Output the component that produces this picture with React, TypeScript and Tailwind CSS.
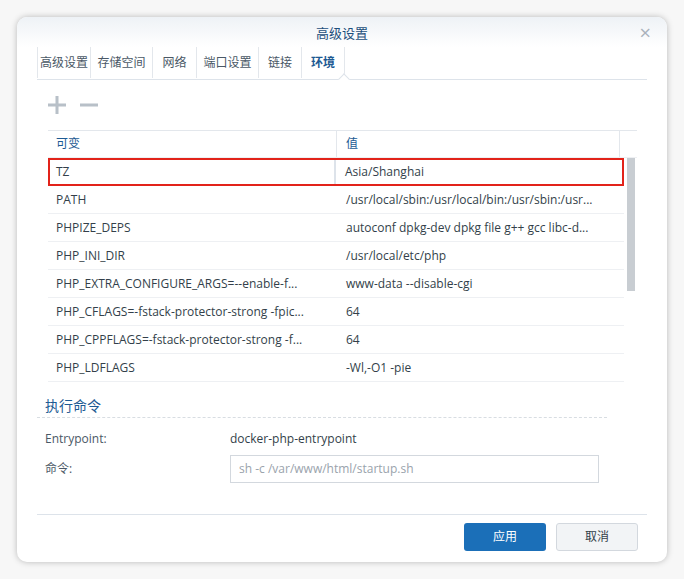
import React from "react";

const rows: [string, string][] = [
  ["TZ", "Asia/Shanghai"],
  ["PATH", "/usr/local/sbin:/usr/local/bin:/usr/sbin:/usr..."],
  ["PHPIZE_DEPS", "autoconf dpkg-dev dpkg file g++ gcc libc-d..."],
  ["PHP_INI_DIR", "/usr/local/etc/php"],
  ["PHP_EXTRA_CONFIGURE_ARGS=--enable-f...", "www-data --disable-cgi"],
  ["PHP_CFLAGS=-fstack-protector-strong -fpic...", "64"],
  ["PHP_CPPFLAGS=-fstack-protector-strong -f...", "64"],
  ["PHP_LDFLAGS", "-Wl,-O1 -pie"],
];

const tabs: [string, number][] = [
  ["高级设置", 53], ["存储空间", 62], ["网络", 44], ["端口设置", 62], ["链接", 43], ["环境", 44],
];

export default function App() {
  return (
    <div className="w-[684px] h-[579px] bg-[#f7f7f7] pt-[17px] pl-[17px]" style={{ fontFamily: '"Open Sans","Noto Sans CJK SC",sans-serif' }}>
      <div className="w-[650px] h-[545px] bg-white rounded-[10px] shadow-[0_0_6px_rgba(0,0,0,0.25)] flex flex-col overflow-hidden">
        <div className="h-[30px] relative flex items-center justify-center bg-gradient-to-b from-[#eef2f6] to-white">
          <span className="text-[13px] text-[#1d4f7c] mt-[3px]">高级设置</span>
          <span className="absolute right-[16px] top-[6px] text-[#aab2bb] text-[20px] leading-none">×</span>
        </div>
        <div className="mx-[20px] h-[33px] flex border-b border-[#dde3ea] relative">
          {tabs.map(([t, w], i) => (
            <div key={t} style={{ width: w }} className={`shrink-0 h-[31px] flex items-center justify-center text-[12px] border-l ${i === 5 ? "border-r" : ""} border-[#e3e7ec] ${i === 5 ? "text-[#1d5a93] font-semibold" : "text-[#4a5866]"}`}>{t}</div>
          ))}
          <div className="absolute left-[303px] top-[28px] w-[8px] h-[8px] bg-white border-l border-t border-[#dde3ea] rotate-45"></div>
        </div>
        <div className="ml-[31px] h-[50px] flex items-center gap-[14px]">
          <svg width="18" height="18" viewBox="0 0 18 18"><rect x="7.5" y="0" width="3" height="18" fill="#b8c0c8"/><rect x="0" y="7.5" width="18" height="3" fill="#b8c0c8"/></svg>
          <svg width="18" height="18" viewBox="0 0 18 18"><rect x="0" y="7.5" width="18" height="3" fill="#b8c0c8"/></svg>
        </div>
        <div className="ml-[31px] w-[589px] border-t border-[#e3e7ec]">
          <div className="h-[27px] flex text-[12px] text-[#1d5a93] border-b border-[#eef0f3]">
            <div className="w-[289px] pl-[8px] flex items-center border-r border-[#e3e7ec]">可变</div>
            <div className="w-[283px] pl-[9px] flex items-center border-r border-[#e3e7ec]">值</div>
          </div>
          <div className="flex">
            <div className="w-[576px]">
              {rows.map(([k, v], i) => (
                <div key={k} className={`h-[28px] flex text-[12px] text-[#333f4a] ${i === 0 ? "border-2 border-[#e2231a]" : "border-b border-[#eef0f3]"}`}>
                  <div className={`${i === 0 ? "w-[286px] pl-[6px] border-r-2 border-[#dde3ea]" : "w-[289px] pl-[8px]"} flex items-center truncate whitespace-nowrap`}>{k}</div>
                  <div className="flex-1 pl-[9px] flex items-center truncate whitespace-nowrap">{v}</div>
                </div>
              ))}
            </div>
            <div className="w-[13px] flex justify-center">
              <div className="w-[8px] h-[133px] bg-[#c8cdd2]"></div>
            </div>
          </div>
        </div>
        <div className="mx-[20px] mt-[12px] w-[570px] h-[24px] border-b border-dashed border-[#d8dde2] text-[14px] text-[#1d5a93] pl-[8px] flex items-center">执行命令</div>
        <div className="ml-[28px] mt-[10px] flex items-center h-[22px] text-[12px]">
          <div className="w-[185px] text-[#4a5866]">Entrypoint:</div>
          <div className="text-[#333f4a]">docker-php-entrypoint</div>
        </div>
        <div className="ml-[28px] mt-[5px] flex items-center text-[12px]">
          <div className="w-[185px] text-[#4a5866]">命令:</div>
          <div className="w-[369px] h-[28px] border border-[#d3d8de] flex items-center pl-[8px] text-[#9aa3ac]">sh -c /var/www/html/startup.sh</div>
        </div>
        <div className="mx-[20px] mt-[31px] border-t border-[#dde3ea]"></div>
        <div className="flex justify-end gap-[10px] mr-[29px] mt-[8px]">
          <div className="w-[82px] h-[28px] rounded-[3px] bg-[#1b6fb8] text-white text-[12px] flex items-center justify-center">应用</div>
          <div className="w-[82px] h-[28px] rounded-[3px] bg-[#f2f4f6] border border-[#d3d8de] text-[#333f4a] text-[12px] flex items-center justify-center">取消</div>
        </div>
      </div>
    </div>
  );
}
